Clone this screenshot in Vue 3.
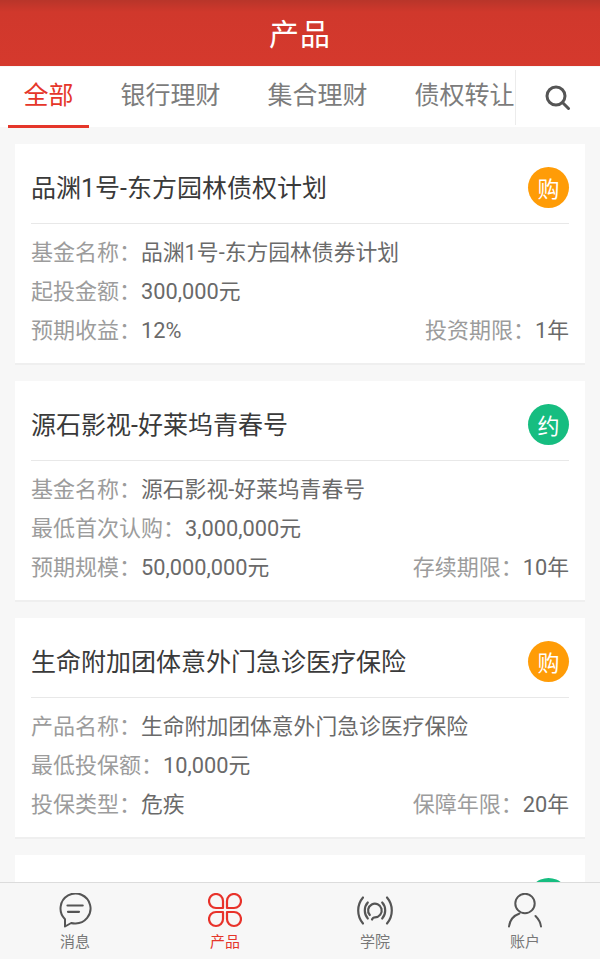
<script setup>
const colon = '\uFF1A'
const tabs = ['全部', '银行理财', '集合理财', '债权转让']
const cards = [
  { title: '品渊1号-东方园林债权计划', badge: '购', kind: 'buy', l1: '基金名称', v1: '品渊1号-东方园林债券计划', l2: '起投金额', v2: '300,000元', l3: '预期收益', v3: '12%', l4: '投资期限', v4: '1年' },
  { title: '源石影视-好莱坞青春号', badge: '约', kind: 'book', l1: '基金名称', v1: '源石影视-好莱坞青春号', l2: '最低首次认购', v2: '3,000,000元', l3: '预期规模', v3: '50,000,000元', l4: '存续期限', v4: '10年' },
  { title: '生命附加团体意外门急诊医疗保险', badge: '购', kind: 'buy', l1: '产品名称', v1: '生命附加团体意外门急诊医疗保险', l2: '最低投保额', v2: '10,000元', l3: '投保类型', v3: '危疾', l4: '保障年限', v4: '20年' },
]
</script>

<template>
  <div class="page">
    <header class="top">产品</header>
    <nav class="tabs">
      <div class="tab-list">
        <span v-for="(t, i) in tabs" :key="t" class="tab" :class="{ active: i === 0 }">{{ t }}</span>
      </div>
      <div class="search">
        <svg width="26" height="25" viewBox="0 0 26 25" fill="none" stroke="#555" stroke-width="3" stroke-linecap="round">
          <circle cx="11" cy="11" r="9" />
          <path d="M18 18l5.500 5.500" />
        </svg>
      </div>
    </nav>
    <main class="list">
      <article v-for="c in cards" :key="c.title" class="card">
        <div class="head">
          <h2 class="title">{{ c.title }}</h2>
          <span class="badge" :class="c.kind">{{ c.badge }}</span>
        </div>
        <div class="body">
          <div class="row"><span class="label">{{ c.l1 + colon }}</span><span class="value">{{ c.v1 }}</span></div>
          <div class="row"><span class="label">{{ c.l2 + colon }}</span><span class="value">{{ c.v2 }}</span></div>
          <div class="row split">
            <span><span class="label">{{ c.l3 + colon }}</span><span class="value">{{ c.v3 }}</span></span>
            <span><span class="label">{{ c.l4 + colon }}</span><span class="value">{{ c.v4 }}</span></span>
          </div>
        </div>
      </article>
      <article class="card">
        <div class="head end"><span class="badge book"></span></div>
      </article>
    </main>
    <footer class="bar">
      <div class="item">
        <svg width="34" height="35" viewBox="0 0 34 35" fill="none" stroke="#555" stroke-width="2" stroke-linecap="round" stroke-linejoin="round">
          <path d="M7 33.500V26.200A15 15 0 1 1 17 30.500C15.500 30.500 14.300 30.300 13.200 30Z" />
          <path d="M9.500 12.500H24.700M10 18.800H21" stroke-width="2.200" />
        </svg>
        <span>消息</span>
      </div>
      <div class="item on">
        <svg width="34" height="35" viewBox="0 0 34 35" fill="none" stroke="#e8322a" stroke-width="2.200" stroke-linejoin="round">
          <path d="M15 15H8A7 7 0 1 1 15 8Z" />
          <path d="M19 15H26A7 7 0 1 0 19 8Z" />
          <path d="M15 19H8A7 7 0 1 0 15 26Z" />
          <path d="M19 19H26A7 7 0 1 1 19 26Z" />
        </svg>
        <span>产品</span>
      </div>
      <div class="item">
        <svg width="36" height="35" viewBox="0 0 36 35" fill="none" stroke="#555" stroke-width="2.200" stroke-linecap="round">
          <path d="M6 4.500C-.4 12-.4 23 6 30.500M30 4.500C36.400 12 36.400 23 30 30.500" />
          <path d="M10.800 9.500C6.800 13.800 6.800 21.200 10.800 25.500M25.200 9.500C29.200 13.800 29.200 21.200 25.200 25.500" />
          <path d="M15 26.500C15.500 25.200 16.500 24.300 18 24.300A6.800 6.800 0 1 0 12.800 22" />
        </svg>
        <span>学院</span>
      </div>
      <div class="item">
        <svg width="34" height="35" viewBox="0 0 34 35" fill="none" stroke="#555" stroke-width="2" stroke-linecap="round">
          <circle cx="17" cy="10.500" r="9.700" />
          <path d="M1 33.500C1.800 27 5.800 22.500 11.500 20.500M27.500 23C30.500 26 32.500 29.500 33 33.500" />
        </svg>
        <span>账户</span>
      </div>
    </footer>
  </div>
</template>

<style>
html, body { margin: 0; padding: 0; background: #f7f7f7; }
</style>

<style scoped>
.page {
  width: 600px;
  height: 959px;
  display: flex;
  flex-direction: column;
  overflow: hidden;
  background: #f7f7f7;
  font-family: Roboto, "Noto Sans CJK SC", sans-serif;
  color: #333;
}
.top {
  height: 66px;
  box-sizing: border-box;
  padding-bottom: 3px;
  flex: none;
  margin-bottom: 1px;
  display: flex;
  align-items: center;
  justify-content: center;
  color: #fff;
  font-size: 30px;
  letter-spacing: 1px;
  background: linear-gradient(#b8352a 0, #d0382c 12px, #d5392d 100%);
}
.tabs {
  flex: none;
  height: 60px;
  display: flex;
  background: #fff;
}
.tab-list {
  width: 515px;
  flex: none;
  box-sizing: border-box;
  padding-left: 8px;
  display: flex;
  gap: 16px;
  white-space: nowrap;
}
.tab {
  flex: none;
  padding: 0 15.500px;
  font-size: 25px;
  line-height: 58px;
  color: #7c7c7c;
  height: 60px;
}
.tab.active {
  color: #e5362a;
  position: relative;
}
.tab.active::after {
  content: "";
  position: absolute;
  left: 0;
  right: 0;
  top: 58px;
  height: 3px;
  background: #e5362a;
}
.search {
  flex: 1;
  margin: 3px 0 2px;
  background: #fff;
  position: relative;
  border-left: 1px solid #ececec;
  display: flex;
  align-items: center;
  justify-content: center;
}
.list {
  flex: 1;
  min-height: 0;
  overflow: hidden;
  padding: 17px 15px 0;
  display: flex;
  flex-direction: column;
  gap: 16px;
}
.card {
  flex: none;
  height: 221px;
  box-sizing: border-box;
  padding: 0 16px;
  background: #fff;
  border-bottom: 2px solid #efefef;
}
.head {
  height: 72px;
  padding-top: 7px;
  display: flex;
  align-items: center;
  justify-content: space-between;
  border-bottom: 1px solid #e8e8e8;
}
.head.end { justify-content: flex-end; border: 0; }
.title {
  margin: 0;
  padding-bottom: 2px;
  font-size: 25px;
  font-weight: 400;
  color: #3a3a3a;
}
.badge {
  width: 41px;
  height: 41px;
  border-radius: 50%;
  display: flex;
  align-items: center;
  justify-content: center;
  color: #fff;
  font-size: 22px;
}
.badge.buy { background: #ff9c07; }
.badge.book { background: #16bd80; }
.body { padding-top: 9px; }
.row {
  height: 39px;
  line-height: 39px;
  font-size: 22px;
  white-space: nowrap;
}
.split { display: flex; justify-content: space-between; }
.label { color: #9c9c9c; }
.value { color: #6a6a6a; font-size: 21.800px; }
.bar {
  flex: none;
  height: 76px;
  border-top: 1px solid #dcdcdc;
  background: #f7f7f7;
  display: grid;
  grid-template-columns: repeat(4, 150px);
  position: relative;
}
.item {
  display: flex;
  flex-direction: column;
  align-items: center;
  padding-top: 10px;
  font-size: 15px;
  color: #777;
  line-height: 20px;
}
.item svg { margin-bottom: 4px; }
.item.on { color: #e5362a; }
</style>
